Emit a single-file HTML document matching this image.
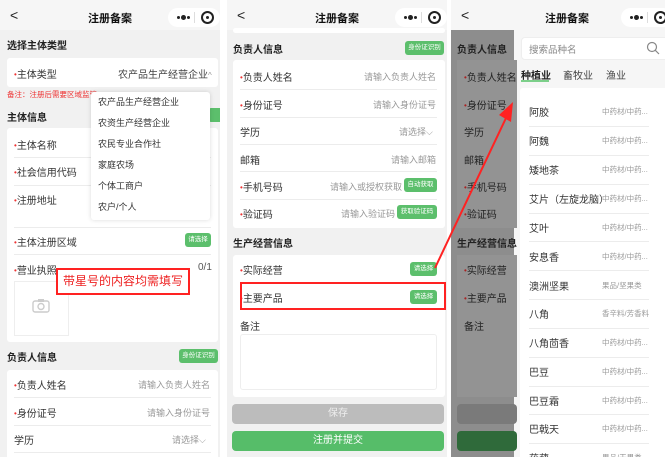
<!DOCTYPE html>
<html><head><meta charset="utf-8"><style>
*{margin:0;padding:0;box-sizing:border-box}
body{width:665px;height:457px;overflow:hidden;background:#fff;position:relative;font-family:"Liberation Sans","Noto Sans CJK SC",sans-serif;color:#333}
.p{position:absolute;top:0;height:457px;background:#f1f1f1;overflow:hidden}
.a{position:absolute;white-space:nowrap}
.nav{position:absolute;left:0;top:0;width:100%;height:30px;background:#f6f6f6}
.title{position:absolute;top:10px;left:0;width:100%;text-align:center;font-size:11px;font-weight:bold;color:#111}
.back{position:absolute;left:10px;top:7px;font-size:14px;color:#222}
.cap{position:absolute;top:8px;width:52px;height:19px;border-radius:10px;background:#fff}
.card{position:absolute;background:#fff;border-radius:3px}
.h{font-size:10px;font-weight:bold;color:#222}
.l{font-size:10px;color:#333}
.l b{color:#e33;font-weight:normal;font-size:8px;position:relative;top:-1px}
.ph{font-size:9px;color:#999}
.ln{position:absolute;height:1px;background:#ececec}
.btn{position:absolute;background:#5cbf6c;color:#fff;font-size:6.5px;border-radius:3px;text-align:center;line-height:14px;height:14px}
.dd div{height:21px;line-height:21px;font-size:9px;color:#333;padding-left:7px}
.it{font-size:10px;color:#333}
.ct{font-size:7.5px;color:#999}
.d{position:absolute;background:#222;border-radius:50%}
</style></head><body>

<!-- Panel 1 -->
<div class="p" style="left:0;width:220px">
 <div class="nav"><div class="back">&lt;</div><div class="title">注册备案</div>
  <div class="cap" style="left:168px"><span class="d" style="left:9px;top:8px;width:3px;height:3px"></span><span class="d" style="left:13px;top:7px;width:5px;height:5px"></span><span class="d" style="left:19px;top:8px;width:3px;height:3px"></span><span class="a" style="left:26px;top:4px;width:1px;height:11px;background:#ddd"></span><span class="a" style="left:33px;top:3px;width:13px;height:13px;border:2px solid #222;border-radius:50%"></span><span class="d" style="left:38px;top:8px;width:3px;height:3px"></span></div></div>
 <div class="a h" style="left:7px;top:37px">选择主体类型</div>
 <div class="card" style="left:7px;top:58px;width:211px;height:29px"></div>
 <div class="a l" style="left:14px;top:66px"><b>•</b>主体类型</div>
 <div class="a l" style="left:118px;top:66px;color:#444">农产品生产经营企业<span style="color:#999;font-size:8px">^</span></div>
 <div class="a" style="left:7px;top:89px;font-size:7.5px;color:#e33">备注：注册后需要区域监管</div>
 <div class="a h" style="left:7px;top:109px">主体信息</div>
 <div class="btn" style="left:208px;top:108px;width:20px"></div>
 <div class="card" style="left:7px;top:128px;width:211px;height:214px"></div>
 <div class="a l" style="left:14px;top:137px"><b>•</b>主体名称</div><div class="ln" style="left:14px;top:157px;width:197px"></div>
 <div class="a l" style="left:14px;top:164px"><b>•</b>社会信用代码</div><div class="ln" style="left:14px;top:185px;width:197px"></div>
 <div class="a l" style="left:14px;top:192px"><b>•</b>注册地址</div><div class="ln" style="left:14px;top:227px;width:197px"></div>
 <div class="a l" style="left:14px;top:234px"><b>•</b>主体注册区域</div><div class="btn" style="left:185px;top:233px;width:26px">请选择</div><div class="ln" style="left:14px;top:254px;width:197px"></div>
 <div class="a l" style="left:14px;top:262px"><b>•</b>营业执照</div><div class="a" style="left:198px;top:262px;font-size:10px;color:#555">0/1</div>
 <div class="a" style="left:14px;top:281px;width:55px;height:55px;border:1px solid #eee"></div>
 <svg class="a" style="left:32px;top:298px" width="18" height="15" viewBox="0 0 18 15"><rect x="1" y="3" width="16" height="11" rx="2" fill="none" stroke="#ccc" stroke-width="1.4"/><rect x="6" y="1" width="6" height="3" fill="#ccc"/><circle cx="9" cy="8.5" r="3" fill="none" stroke="#ccc" stroke-width="1.4"/></svg>
 <div class="a h" style="left:7px;top:349px">负责人信息</div>
 <div class="btn" style="left:179px;top:349px;width:39px">身份证识别</div>
 <div class="card" style="left:7px;top:370px;width:211px;height:90px"></div>
 <div class="a l" style="left:14px;top:377px"><b>•</b>负责人姓名</div><div class="a ph" style="left:138px;top:378px">请输入负责人姓名</div><div class="ln" style="left:14px;top:397px;width:197px"></div>
 <div class="a l" style="left:14px;top:405px"><b>•</b>身份证号</div><div class="a ph" style="left:147px;top:406px">请输入身份证号</div><div class="ln" style="left:14px;top:425px;width:197px"></div>
 <div class="a l" style="left:14px;top:432px">学历</div><div class="a ph" style="left:172px;top:433px">请选择⌵</div><div class="ln" style="left:14px;top:452px;width:197px"></div>
 <div class="a dd" style="left:91px;top:92px;width:119px;height:128px;background:#fff;border-radius:3px;box-shadow:0 0 5px rgba(0,0,0,.15)"><div>农产品生产经营企业</div><div>农资生产经营企业</div><div>农民专业合作社</div><div>家庭农场</div><div>个体工商户</div><div>农户/个人</div></div>
 <div class="a" style="left:56px;top:268px;width:134px;height:27px;border:2px solid #f22;background:#fff;color:#e22;font-size:12px;line-height:23px;text-align:center">带星号的内容均需填写</div>
</div>

<!-- Panel 2 -->
<div class="p" style="left:227px;width:220px">
 <div class="nav"><div class="back">&lt;</div><div class="title">注册备案</div>
  <div class="cap" style="left:168px"><span class="d" style="left:9px;top:8px;width:3px;height:3px"></span><span class="d" style="left:13px;top:7px;width:5px;height:5px"></span><span class="d" style="left:19px;top:8px;width:3px;height:3px"></span><span class="a" style="left:26px;top:4px;width:1px;height:11px;background:#ddd"></span><span class="a" style="left:33px;top:3px;width:13px;height:13px;border:2px solid #222;border-radius:50%"></span><span class="d" style="left:38px;top:8px;width:3px;height:3px"></span></div></div>
 <div class="card" style="left:6px;top:28px;width:212px;height:5px"></div>
 <div class="a h" style="left:6px;top:41px">负责人信息</div>
 <div class="btn" style="left:178px;top:41px;width:39px">身份证识别</div>
 <div class="card" style="left:6px;top:60px;width:212px;height:168px"></div>
 <div class="a l" style="left:13px;top:69px"><b>•</b>负责人姓名</div><div class="a ph" style="left:137px;top:70px">请输入负责人姓名</div><div class="ln" style="left:13px;top:89px;width:197px"></div>
 <div class="a l" style="left:13px;top:97px"><b>•</b>身份证号</div><div class="a ph" style="left:146px;top:98px">请输入身份证号</div><div class="ln" style="left:13px;top:117px;width:197px"></div>
 <div class="a l" style="left:13px;top:124px">学历</div><div class="a ph" style="left:172px;top:125px">请选择⌵</div><div class="ln" style="left:13px;top:144px;width:197px"></div>
 <div class="a l" style="left:13px;top:152px">邮箱</div><div class="a ph" style="left:164px;top:153px">请输入邮箱</div><div class="ln" style="left:13px;top:171px;width:197px"></div>
 <div class="a l" style="left:13px;top:179px"><b>•</b>手机号码</div><div class="a ph" style="left:103px;top:180px">请输入或授权获取</div><div class="btn" style="left:177px;top:178px;width:33px">自动获取</div><div class="ln" style="left:13px;top:199px;width:197px"></div>
 <div class="a l" style="left:13px;top:206px"><b>•</b>验证码</div><div class="a ph" style="left:114px;top:207px">请输入验证码</div><div class="btn" style="left:170px;top:205px;width:40px">获取验证码</div>
 <div class="a" style="left:220px;top:190px;width:2px;height:40px;background:#aaa"></div>
 <div class="a h" style="left:6px;top:235px">生产经营信息</div>
 <div class="card" style="left:6px;top:255px;width:212px;height:142px"></div>
 <div class="a l" style="left:13px;top:262px"><b>•</b>实际经营</div><div class="btn" style="left:183px;top:262px;width:27px">请选择</div>
 <div class="a l" style="left:13px;top:290px"><b>•</b>主要产品</div><div class="btn" style="left:183px;top:290px;width:27px">请选择</div>
 <div class="a" style="left:13px;top:282px;width:206px;height:28px;border:2px solid #f22"></div>
 <div class="a l" style="left:13px;top:318px">备注</div>
 <div class="a" style="left:13px;top:334px;width:197px;height:56px;border:1px solid #eee;border-radius:3px"></div>
 <div class="a" style="left:5px;top:404px;width:212px;height:20px;background:#bcbcbc;border-radius:4px;color:#eee;font-size:10px;text-align:center;line-height:20px">保存</div>
 <div class="a" style="left:5px;top:431px;width:212px;height:20px;background:#56bd69;border-radius:4px;color:#fff;font-size:10px;text-align:center;line-height:20px">注册并提交</div>
</div>

<!-- Panel 3 -->
<div class="p" style="left:451px;width:214px;background:#f6f6f6">
 <div class="nav"><div class="back">&lt;</div><div class="title" style="width:232px">注册备案</div>
  <div class="cap" style="left:170px"><span class="d" style="left:9px;top:8px;width:3px;height:3px"></span><span class="d" style="left:13px;top:7px;width:5px;height:5px"></span><span class="d" style="left:19px;top:8px;width:3px;height:3px"></span><span class="a" style="left:26px;top:4px;width:1px;height:11px;background:#ddd"></span><span class="a" style="left:33px;top:3px;width:13px;height:13px;border:2px solid #222;border-radius:50%"></span><span class="d" style="left:38px;top:8px;width:3px;height:3px"></span></div></div>
 <div class="a" style="left:0;top:30px;width:63px;height:427px;background:#8d8d8d">
  <div class="a h" style="left:6px;top:11px;color:#222">负责人信息</div>
  <div class="a" style="left:6px;top:30px;width:60px;height:168px;background:#939393"></div>
  <div class="a l" style="left:13px;top:39px;color:#222"><b style="color:#a22">•</b>负责人姓名</div>
  <div class="a l" style="left:13px;top:67px;color:#222"><b style="color:#a22">•</b>身份证号</div>
  <div class="a l" style="left:13px;top:94px;color:#222">学历</div>
  <div class="a l" style="left:13px;top:122px;color:#222">邮箱</div>
  <div class="a l" style="left:13px;top:149px;color:#222"><b style="color:#a22">•</b>手机号码</div>
  <div class="a l" style="left:13px;top:176px;color:#222"><b style="color:#a22">•</b>验证码</div>
  <div class="a h" style="left:6px;top:205px;color:#222">生产经营信息</div>
  <div class="a" style="left:6px;top:225px;width:60px;height:142px;background:#939393"></div>
  <div class="a l" style="left:13px;top:232px;color:#222"><b style="color:#a22">•</b>实际经营</div>
  <div class="a l" style="left:13px;top:260px;color:#222"><b style="color:#a22">•</b>主要产品</div>
  <div class="a l" style="left:13px;top:288px;color:#222">备注</div>
  <div class="a" style="left:6px;top:374px;width:60px;height:20px;background:#7a7a7a;border-radius:4px"></div>
  <div class="a" style="left:6px;top:401px;width:60px;height:20px;background:#2f6a3a;border-radius:4px"></div>
 </div>
 <div class="a" style="left:70px;top:37px;width:150px;height:23px;background:#fff;border:1px solid #eee;border-radius:4px"></div>
 <div class="a ph" style="left:78px;top:42px;font-size:9.5px;color:#888">搜索品种名</div>
 <svg class="a" style="left:195px;top:41px" width="14" height="14" viewBox="0 0 14 14"><circle cx="6" cy="6" r="4.5" fill="none" stroke="#888" stroke-width="1.2"/><line x1="9.3" y1="9.3" x2="13" y2="13" stroke="#888" stroke-width="1.2"/></svg>
 <div class="a" style="left:70px;top:67px;font-size:10px;font-weight:bold;color:#222">种植业</div>
 <div class="a" style="left:70px;top:80px;width:28px;height:2px;background:#7ccf8a"></div>
 <div class="a" style="left:112px;top:67px;font-size:10px;color:#444">畜牧业</div>
 <div class="a" style="left:155px;top:67px;font-size:10px;color:#444">渔业</div>
 <div class="card" style="left:69px;top:88px;width:150px;height:380px"></div>
 <div class="a" style="left:78px;top:104px">
  <div class="a it" style="top:0">阿胶</div><div class="a ct" style="left:73px;top:2px">中药材/中药...</div><div class="ln" style="top:22px;width:120px"></div>
  <div class="a it" style="top:29px">阿魏</div><div class="a ct" style="left:73px;top:31px">中药材/中药...</div><div class="ln" style="top:51px;width:120px"></div>
  <div class="a it" style="top:58px">矮地茶</div><div class="a ct" style="left:73px;top:60px">中药材/中药...</div><div class="ln" style="top:80px;width:120px"></div>
  <div class="a it" style="top:87px">艾片（左旋龙脑）</div><div class="a ct" style="left:73px;top:89px">中药材/中药...</div><div class="ln" style="top:109px;width:120px"></div>
  <div class="a it" style="top:116px">艾叶</div><div class="a ct" style="left:73px;top:118px">中药材/中药...</div><div class="ln" style="top:137px;width:120px"></div>
  <div class="a it" style="top:145px">安息香</div><div class="a ct" style="left:73px;top:147px">中药材/中药...</div><div class="ln" style="top:166px;width:120px"></div>
  <div class="a it" style="top:174px">澳洲坚果</div><div class="a ct" style="left:73px;top:176px">果品/坚果类</div><div class="ln" style="top:195px;width:120px"></div>
  <div class="a it" style="top:202px">八角</div><div class="a ct" style="left:73px;top:204px">香辛料/芳香料</div><div class="ln" style="top:224px;width:120px"></div>
  <div class="a it" style="top:231px">八角茴香</div><div class="a ct" style="left:73px;top:233px">中药材/中药...</div><div class="ln" style="top:253px;width:120px"></div>
  <div class="a it" style="top:260px">巴豆</div><div class="a ct" style="left:73px;top:262px">中药材/中药...</div><div class="ln" style="top:282px;width:120px"></div>
  <div class="a it" style="top:289px">巴豆霜</div><div class="a ct" style="left:73px;top:291px">中药材/中药...</div><div class="ln" style="top:310px;width:120px"></div>
  <div class="a it" style="top:317px">巴戟天</div><div class="a ct" style="left:73px;top:319px">中药材/中药...</div><div class="ln" style="top:339px;width:120px"></div>
  <div class="a it" style="top:346px">菝葜</div><div class="a ct" style="left:73px;top:348px">果品/干果类</div>
 </div>
</div>

<svg class="a" style="left:0;top:0" width="665" height="457" viewBox="0 0 665 457"><line x1="435" y1="268" x2="506" y2="118" stroke="#f22" stroke-width="2"/><polygon points="513,102 499,115 511,122" fill="#f22"/></svg>
</body></html>
